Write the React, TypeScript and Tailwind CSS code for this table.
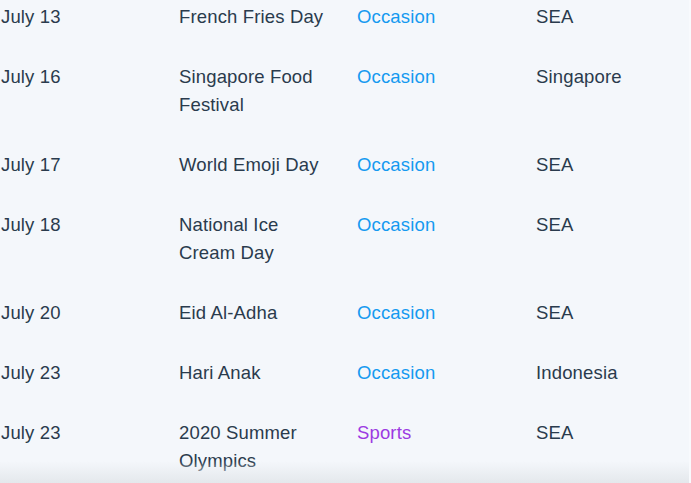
import React from 'react';

interface CalendarEvent {
  date: string;
  name: string;
  category: 'Occasion' | 'Sports';
  region: string;
}

const events: CalendarEvent[] = [
  { date: 'July 13', name: 'French Fries Day', category: 'Occasion', region: 'SEA' },
  { date: 'July 16', name: 'Singapore Food Festival', category: 'Occasion', region: 'Singapore' },
  { date: 'July 17', name: 'World Emoji Day', category: 'Occasion', region: 'SEA' },
  { date: 'July 18', name: 'National Ice Cream Day', category: 'Occasion', region: 'SEA' },
  { date: 'July 20', name: 'Eid Al-Adha', category: 'Occasion', region: 'SEA' },
  { date: 'July 23', name: 'Hari Anak', category: 'Occasion', region: 'Indonesia' },
  { date: 'July 23', name: '2020 Summer Olympics', category: 'Sports', region: 'SEA' },
];

const App: React.FC = () => {
  return (
    <div className="relative h-[483px] w-full overflow-hidden bg-[#f4f7fb] border-r-2 border-[#f8fafd] font-['Liberation_Sans',Arial,sans-serif] text-[18.5px] leading-[28px] tracking-[0.15px] text-[#2a3b4d]">
      <div className="-mt-[13px]">
        {events.map((ev, i) => (
          <div key={i} className="grid grid-cols-[178px_178px_179px_1fr] py-4">
            <div className="pl-px pr-[24px]">{ev.date}</div>
            <div className="pl-px pr-[24px]">{ev.name}</div>
            <div
              className={
                ev.category === 'Sports'
                  ? 'pl-px pr-[24px] text-[#9c3ae2]'
                  : 'pl-px pr-[24px] text-[#149af0]'
              }
            >
              {ev.category}
            </div>
            <div className="pl-px pr-[24px]">{ev.region}</div>
          </div>
        ))}
      </div>
      {/* fade at the bottom edge */}
      <div className="pointer-events-none absolute bottom-0 left-0 right-0 h-[22px] bg-gradient-to-b from-transparent to-[#e4e8ec]" />
    </div>
  );
};

export default App;
